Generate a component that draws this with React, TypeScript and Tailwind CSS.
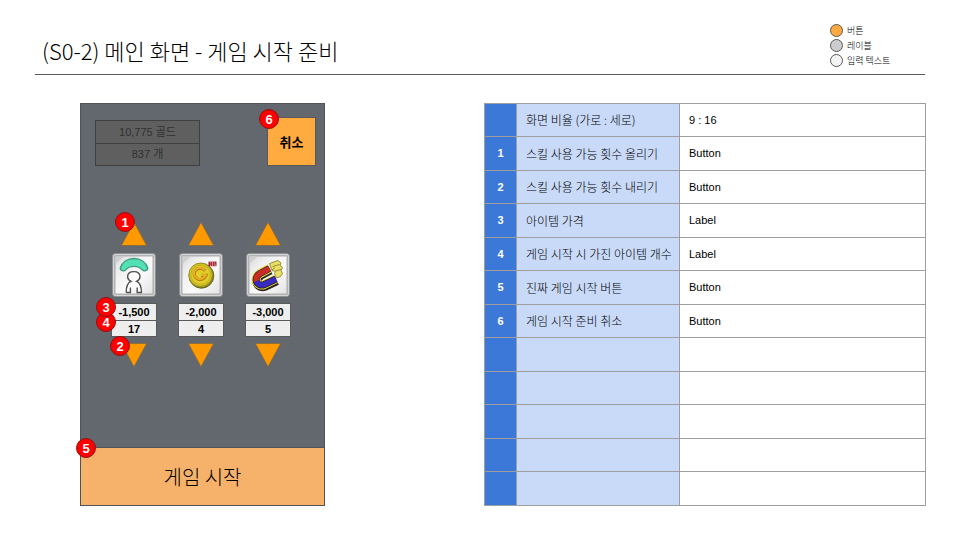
import React from "react";

const hangul = "font-['Noto_Sans_CJK_KR','Liberation_Sans',sans-serif]";
const latin = "font-['Liberation_Sans','Noto_Sans_CJK_KR',sans-serif]";

const legend = [
  { label: "버튼", color: "bg-[#ffa940]" },
  { label: "레이블", color: "bg-[#cccccc]" },
  { label: "입력 텍스트", color: "bg-[#f3f3f3]" },
];

const rows = [
  ["", "화면 비율 (가로 : 세로)", "9 : 16"],
  ["1", "스킬 사용 가능 횟수 올리기", "Button"],
  ["2", "스킬 사용 가능 횟수 내리기", "Button"],
  ["3", "아이템 가격", "Label"],
  ["4", "게임 시작 시 가진 아이템 개수", "Label"],
  ["5", "진짜 게임 시작 버튼", "Button"],
  ["6", "게임 시작 준비 취소", "Button"],
  ["", "", ""],
  ["", "", ""],
  ["", "", ""],
  ["", "", ""],
  ["", "", ""],
];

function Badge({ n, place }: { n: number; place: string }) {
  return (
    <span
      className={`absolute flex size-5 items-center justify-center rounded-full border border-[#8f1010] bg-[#ff0000] text-[13px] leading-none font-bold text-white ${latin} ${place}`}
    >
      {n}
    </span>
  );
}

function Tile({ id, children }: { id: string; children: React.ReactNode }) {
  return (
    <svg viewBox="0 0 44 44" className="size-11" aria-hidden="true">
      <defs>
        <linearGradient id={id} x1="0" y1="0" x2="1" y2="1">
          <stop offset="0" stopColor="#dcdcdc" />
          <stop offset="0.3" stopColor="#f1f1f1" />
          <stop offset="0.6" stopColor="#fafafa" />
          <stop offset="1" stopColor="#e2e2e2" />
        </linearGradient>
      </defs>
      <rect x="0.5" y="0.5" width="43" height="43" rx="3" fill="#b4b6b8" stroke="#8d9093" />
      <rect x="1.7" y="1.7" width="40.6" height="40.6" rx="2" fill="none" stroke="#d6d6d6" strokeWidth="1.2" />
      <rect x="3" y="3" width="38" height="38" fill={`url(#${id})`} stroke="#a0a0a0" strokeWidth="0.8" />
      <path d="M3.5 3.5H12L3.5 11Z" fill="#cfcfcf" />
      {children}
    </svg>
  );
}

function Parachute() {
  return (
    <Tile id="tile-parachute">
      <path
        d="M8.3 15C10 9 15.5 5.5 22 5.5S34 9 35.7 15C36 17.6 32 19 30 16.6C28 14.3 25.5 13.3 22 13.3S16 14.3 14 16.6C12 19 8 17.6 8.3 15Z"
        fill="#53e0b4"
        stroke="#3f9a80"
        strokeWidth="1.3"
      />
      <path
        d="M14.2 39.5C14.2 34 15 30 19 28.4C16.3 27 15.6 24.8 15.6 23.8C15.6 20.4 18.4 18.6 21.8 18.6S28 20.4 28 23.8C28 24.8 27.3 27 24.6 28.4C28.6 30 29.4 34 29.4 39.5H25.2V34.5M18.4 34.5V39.5H14.2"
        fill="#ffffff"
        stroke="#505050"
        strokeWidth="1.4"
      />
    </Tile>
  );
}

function Coin() {
  return (
    <Tile id="tile-coin">
      <circle cx="22.4" cy="22.8" r="12.4" fill="#8a861f" stroke="#66641f" strokeWidth="1" />
      <circle cx="21.6" cy="21.8" r="11.8" fill="#cfc024" stroke="#8f8a20" strokeWidth="0.8" />
      <circle cx="21.6" cy="21.8" r="9.6" fill="#e0cf2a" stroke="#b7a81f" strokeWidth="0.6" />
      <path d="M26.2 17.8A6 5.6 0 1 0 27 22.4H22" fill="none" stroke="#b98412" strokeWidth="3.2" />
      <path d="M26 17.4A6 5.6 0 1 0 26.7 22H22" fill="none" stroke="#eeb02a" strokeWidth="1.8" />
      <rect x="29.5" y="8.6" width="8" height="4.6" fill="#a3202c" />
      <path d="M31.6 8.6V10.4M31.6 11.6V13.2M33.6 8.6V13.2M35 10.2H36.2M35 12H37" stroke="#e9d4d6" strokeWidth="0.7" />
    </Tile>
  );
}

function Magnet() {
  const body = "M23.5 15.5L14 20.5C6.5 25 11 34.5 18.5 31.5L30 26";
  return (
    <Tile id="tile-magnet">
      <path d={body} transform="translate(0.8 1.4)" fill="none" stroke="#2a2720" strokeWidth="9.4" />
      <path d={body} fill="none" stroke="#e2d548" strokeWidth="9" />
      <path d={body} fill="none" stroke="#2a2420" strokeWidth="7" />
      <path d="M23.5 15.5L14 20.5C10.5 22.5 9.6 25.6 10.6 28.2" fill="none" stroke="#c92c26" strokeWidth="5.6" />
      <path d="M10.6 28.2C11.8 31.2 15 32.9 18.5 31.5L30 26" fill="none" stroke="#3a2bc0" strokeWidth="5.6" />
      <path
        d="M23.5 10.500L32 7.500L35 10L34 12.500L36.500 14.500L35 17.500L36.500 20.500L34.500 23.500L30.500 25L28.500 20.500L29.500 18.500L26 17.500Z"
        fill="#eadf62"
        stroke="#8c842f"
        strokeWidth="0.9"
      />
      <path d="M26.500 13.500L33.500 11.500M29.500 18L35 16.500M26 17L29 14.500" fill="none" stroke="#8c842f" strokeWidth="0.9" />
    </Tile>
  );
}

function Arrow({ down = false }: { down?: boolean }) {
  return (
    <svg viewBox="0 0 26 24" className="block h-6 w-[26px]" aria-hidden="true">
      <path
        d={down ? "M0.3 0.4H25.7L13 23.8Z" : "M0.3 23.6H25.7L13 0.2Z"}
        fill="#ff9900"
        stroke="#7a6540"
        strokeWidth="0.7"
      />
    </svg>
  );
}

const items = [
  { name: "낙하산", price: "-1,500", count: "17", icon: <Parachute /> },
  { name: "코인", price: "-2,000", count: "4", icon: <Coin /> },
  { name: "자석", price: "-3,000", count: "5", icon: <Magnet /> },
];

function Phone() {
  return (
    <section className="relative flex w-[245px] shrink-0 flex-col border border-[#505358] bg-[#63686f]">
      <div className="flex items-end justify-between pt-[13px] pr-2 pl-[14px]">
        <div className={`w-[105px] border border-[#404040] bg-[#5f5f5f] text-center text-[11px] text-[#303030] ${latin}`}>
          <p className="h-[23px] border-b border-[#404040] leading-[22px]">10,775 골드</p>
          <p className="h-[21px] leading-[21px]">837 개</p>
        </div>
        <div className="relative">
          <button
            type="button"
            className={`block size-[49px] border border-[#595959] bg-[#ffab40] text-[13px] font-bold text-black ${hangul}`}
          >
            취소
          </button>
          <Badge n={6} place="-top-2 -left-2" />
        </div>
      </div>

      <div className="flex grow gap-[21px] pt-14 pl-[30px]">
        {items.map((item, i) => (
          <div key={item.name} className="flex w-[46px] flex-col items-center">
            <div className="relative">
              <button type="button" aria-label={`${item.name} 올리기`} className="block">
                <Arrow />
              </button>
              {i === 0 && <Badge n={1} place="-top-[10px] -left-[6px]" />}
            </div>
            <div className="mt-[7px]">{item.icon}</div>
            <div
              className={`relative mt-[6px] w-full border border-[#595959] bg-[#eeeeee] text-center text-[11px] font-bold text-black ${latin}`}
            >
              {i === 0 && <Badge n={4} place="top-[8px] -left-[16px]" />}
              {i === 0 && <Badge n={3} place="-top-[7px] -left-[16px]" />}
              <p className="h-[17px] border-b border-[#595959] leading-[17px]">{item.price}</p>
              <p className="h-[15px] leading-[16px]">{item.count}</p>
            </div>
            <div className="relative mt-[6px]">
              <button type="button" aria-label={`${item.name} 내리기`} className="block">
                <Arrow down />
              </button>
              {i === 0 && <Badge n={2} place="-top-[7px] -left-[11px]" />}
            </div>
          </div>
        ))}
      </div>

      <div className="relative border-t border-[#505358]">
        <button type="button" className={`block h-[57px] w-full bg-[#f6b26b] text-[20px] font-light text-black ${hangul}`}>
          게임 시작
        </button>
        <Badge n={5} place="-top-[10px] -left-[5px]" />
      </div>
    </section>
  );
}

export default function App() {
  return (
    <div className="min-h-screen bg-white pb-[34px]">
      <header className="mx-[35px] flex items-center justify-between border-b border-[#595959] pt-[23px] pb-[6px]">
        <h1 className={`pt-2 pl-[7px] text-[22px] leading-8 font-light text-black ${hangul}`}>
          (S0-2) 메인 화면 - 게임 시작 준비
        </h1>
        <ul className={`w-[95px] text-[9px] font-light text-black ${hangul}`}>
          {legend.map((l) => (
            <li key={l.label} className="flex h-[15px] items-center gap-1">
              <span className={`size-[13px] rounded-full border border-[#595959] ${l.color}`} />
              {l.label}
            </li>
          ))}
        </ul>
      </header>

      <main className="flex justify-between pt-7 pr-[34px] pl-20">
        <Phone />
        <table className="w-[442px] table-fixed border-collapse text-black">
          <colgroup>
            <col className="w-8" />
            <col className="w-[163px]" />
            <col />
          </colgroup>
          <tbody>
            {rows.map(([n, name, kind], i) => (
              <tr key={i} className="h-[33px] even:h-[34px]">
                <th scope="row" className={`border border-[#9e9e9e] bg-[#3c78d8] p-0 text-center text-[11px] font-bold text-white ${latin}`}>
                  {n}
                </th>
                <td className={`border border-[#9e9e9e] bg-[#c9daf8] py-0 pr-0 pl-[9px] text-[12px] font-light whitespace-nowrap ${hangul}`}>
                  {name}
                </td>
                <td className={`border border-[#9e9e9e] py-0 pr-0 pl-[9px] text-[11px] ${latin}`}>{kind}</td>
              </tr>
            ))}
          </tbody>
        </table>
      </main>
    </div>
  );
}
